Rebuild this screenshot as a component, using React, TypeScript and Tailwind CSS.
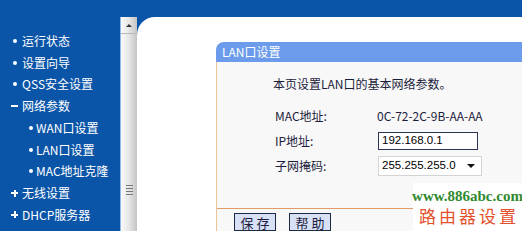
import type { ReactNode } from 'react';

type MenuItem = {
  label: string;
  mark: 'dot' | 'plus' | 'minus';
  sub?: boolean;
};

const menu: MenuItem[] = [
  { label: '运行状态', mark: 'dot' },
  { label: '设置向导', mark: 'dot' },
  { label: 'QSS安全设置', mark: 'dot' },
  { label: '网络参数', mark: 'minus' },
  { label: 'WAN口设置', mark: 'dot', sub: true },
  { label: 'LAN口设置', mark: 'dot', sub: true },
  { label: 'MAC地址克隆', mark: 'dot', sub: true },
  { label: '无线设置', mark: 'plus' },
  { label: 'DHCP服务器', mark: 'plus' },
];

function Mark({ mark }: { mark: MenuItem['mark'] }) {
  if (mark === 'dot') return <span className="w-[4px] h-[4px] rounded-full bg-white" />;
  if (mark === 'minus') return <span className="w-[7px] h-[2px] bg-white" />;
  return (
    <span className="relative w-[7px] h-[7px]">
      <span className="absolute left-0 top-[2.5px] w-[7px] h-[2px] bg-white" />
      <span className="absolute left-[2.5px] top-0 w-[2px] h-[7px] bg-white" />
    </span>
  );
}

function Row({ label, children }: { label: string; children: ReactNode }) {
  return (
    <div className="flex items-center">
      <span className="w-[102px]">{label}</span>
      {children}
    </div>
  );
}

export default function App() {
  return (
    <div
      className="w-[522px] h-[231px] overflow-hidden bg-[#0b55a8] flex flex-col relative text-[12px]"
      style={{ fontFamily: '"Noto Sans CJK SC", "Liberation Sans", sans-serif' }}
    >
      {/* top band */}
      <div className="h-[17px] shrink-0" />

      <div className="flex-1 flex min-h-0">
        {/* Sidebar menu */}
        <nav className="w-[120px] shrink-0 pt-[13px] text-white">
          {menu.map((m) => (
            <div
              key={m.label}
              className={`h-[21.75px] flex items-center leading-none ${m.sub ? 'pl-[26px]' : 'pl-[10px]'}`}
            >
              <span className="w-[9px] flex items-center justify-center">
                <Mark mark={m.mark} />
              </span>
              <span className={m.sub ? 'ml-[1px]' : 'ml-[3px]'}>{m.label}</span>
            </div>
          ))}
        </nav>

        {/* Scrollbar */}
        <div className="w-[17px] shrink-0 flex flex-col border-l border-[#8ab8e8] bg-gradient-to-r from-[#fafafa] via-[#e6e6e6] to-[#c4c4c4]">
          <div className="h-[17px] flex items-center justify-center border-b border-[#b8b8b8]">
            <span className="w-0 h-0 border-l-[3px] border-r-[3px] border-b-[3px] border-l-transparent border-r-transparent border-b-[#333]" />
          </div>
          <div className="flex-1 flex flex-col items-center justify-end pb-[36px] gap-[2px]">
            <span className="w-[7px] h-px bg-[#777]" />
            <span className="w-[7px] h-px bg-[#777]" />
            <span className="w-[7px] h-px bg-[#777]" />
            <span className="w-[7px] h-px bg-[#777]" />
          </div>
        </div>

        {/* Content */}
        <main className="flex-1 bg-white rounded-tl-[18px] pl-[79px] pt-[25px] flex flex-col min-w-0">
          <div className="flex-1 flex flex-col">
            <div className="h-[20px] shrink-0 bg-[#6b9bea] rounded-tl-[8px] text-white flex items-center pl-[6px]">
              LAN口设置
            </div>
            <div className="flex-1 bg-[#f8f8f8] border-l border-[#ecc594] flex flex-col text-[#1c1c3c]">
              <div className="h-[146px] pl-[56px] pt-[14px] flex flex-col">
                <div className="h-[16px] flex items-center">本页设置LAN口的基本网络参数。</div>
                <div className="mt-[15px] h-[16px] pl-[2px]">
                  <Row label="MAC地址:">
                    <span>0C-72-2C-9B-AA-AA</span>
                  </Row>
                </div>
                <div className="mt-[9px] h-[18px] pl-[2px]">
                  <Row label="IP地址:">
                    <div
                      className="w-[100px] h-[18px] border border-[#2a3550] bg-white flex items-center pl-[3px] text-[11.5px] text-black ml-[1px]"
                      style={{ fontFamily: '"Liberation Sans", sans-serif' }}
                    >
                      192.168.0.1
                    </div>
                  </Row>
                </div>
                <div className="mt-[6px] h-[20px] pl-[2px]">
                  <Row label="子网掩码:">
                    <div
                      className="w-[104px] h-[20px] border border-[#d4d4d4] bg-white flex items-center pl-[3px] pr-[6px] justify-between text-[11.5px] text-black ml-[1px]"
                      style={{ fontFamily: '"Liberation Sans", sans-serif' }}
                    >
                      <span>255.255.255.0</span>
                      <span className="w-0 h-0 border-l-[4px] border-r-[4px] border-t-[4px] border-l-transparent border-r-transparent border-t-[#111]" />
                    </div>
                  </Row>
                </div>
              </div>
              <div className="flex-1 border-t border-[#e29a66] pl-[17px] pt-[4px] flex items-start gap-[13px]">
                <button className="w-[42px] h-[18px] border border-[#1e2a44] bg-[#d8e0f6] text-[#1c1c3c] text-[13px] leading-none flex items-center justify-center whitespace-pre">
                  保 存
                </button>
                <button className="w-[42px] h-[18px] border border-[#1e2a44] bg-[#d8e0f6] text-[#1c1c3c] text-[13px] leading-none flex items-center justify-center whitespace-pre">
                  帮 助
                </button>
              </div>
            </div>
          </div>
        </main>
      </div>

      {/* Watermark */}
      <div className="absolute right-0 bottom-0 w-[109px] h-[48px] bg-white flex flex-col items-center pt-[4px]">
        <span
          className="text-[15px] font-bold text-[#2f8a2f] leading-[18px]"
          style={{ fontFamily: '"Liberation Serif", serif' }}
        >
          www.886abc.com
        </span>
        <span className="text-[17px] text-[#e4502c] tracking-[3px] leading-[22px] pl-[3px]">路由器设置</span>
      </div>
    </div>
  );
}
